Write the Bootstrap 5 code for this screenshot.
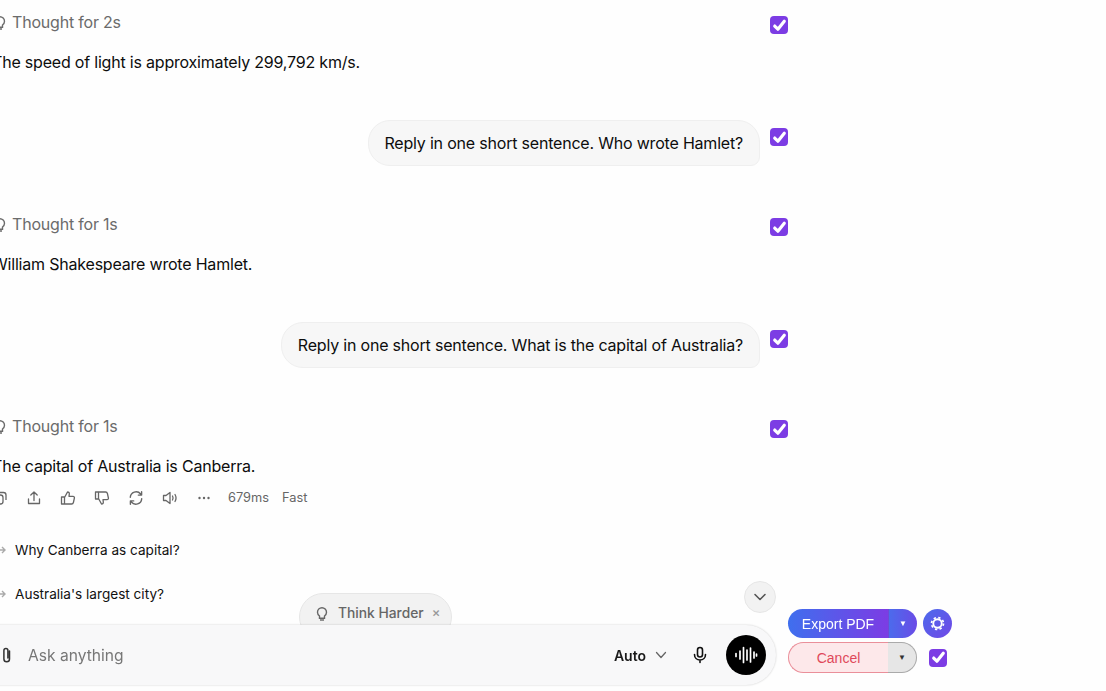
<!DOCTYPE html>
<html lang="en">
<head>
<meta charset="UTF-8" />
<meta name="viewport" content="width=device-width, initial-scale=1.0" />
<title>Chat</title>
<link href="https://cdn.jsdelivr.net/npm/bootstrap@5.3.3/dist/css/bootstrap.min.css" rel="stylesheet" />
<style>
html, body { height: 100%; }
body { font-family: Inter, "Liberation Sans", sans-serif; background: #fefefe; color: #0d0d0d; overflow: hidden; font-size: 16px; letter-spacing: -.2px; }
svg { display: block; flex: none; }
.thread { width: 796px; margin-left: -8px; padding-top: 12px; }
.pick { width: 18px; height: 18px; margin: 0 !important; border-radius: 3px; border: 0; flex: none; background-color: #7c3ce4; background-size: 17px;
  background-image: url("data:image/svg+xml,%3csvg xmlns='http://www.w3.org/2000/svg' viewBox='0 0 16 16'%3e%3cpath fill='none' stroke='%23fff' stroke-width='3' stroke-linecap='round' stroke-linejoin='round' d='M3.500 8.500l3 3 6-7.500'/%3e%3c/svg%3e") !important; }
.pick:checked { background-color: #7c3ce4; }
.thought-row { height: 20px; color: #6b6b6b; }
.thought-row .pick { margin-top: 4px !important; }
.answer { margin-top: 20px; height: 20px; line-height: 20px; }
.user-row { height: 46px; }
.bubble { background: #f7f7f7; border: 1px solid #efefef; border-radius: 22px 22px 9px 22px; height: 46px; line-height: 44px; padding: 0 16px; margin-right: 10px; }
.user-row .pick { margin-top: 8px !important; }
.gap-a { height: 48px; }
.gap-b { height: 48px; }
.tools { margin-top: 2px; height: 40px; color: #666; font-size: 12.8px; letter-spacing: 0; }
.tool-icon { width: 34px; }
.tool-last { width: 32px; }
.tool-text { margin-right: 13px; }
.suggest { height: 44px; font-size: 13.6px; color: #111; letter-spacing: 0; }
.suggest svg { margin-left: 3px; margin-right: 8px; }
.suggest-first { margin-top: 10px; }
.pill { position: fixed; left: 299px; top: 593px; width: 153px; height: 48px; background: #f2f2f2; border: 1px solid #e6e6e6; border-radius: 24px; padding: 0 0 8px 14px; color: #666; font-size: 13.8px; font-weight: 500; letter-spacing: 0; }
.pill-x { margin-left: 8px; color: #999; font-size: 13px; }
.composer { position: fixed; left: -30px; top: 625px; width: 806px; height: 60px; background: #f8f8f9; border-radius: 30px; box-shadow: 0 0 2px rgba(0,0,0,.22); padding: 0 10px 0 29px; }
.ask { color: #777; font-size: 15.6px; margin-left: 13px; padding-top: 1px; letter-spacing: 0; }
.auto-txt { font-size: 14px; font-weight: 600; color: #1a1a1a; letter-spacing: 0; }
.mic-icon { margin-left: 23px; margin-right: 17px; }
.voice { width: 40px; height: 40px; background: #000; border-radius: 50%; }
.down-btn { position: fixed; left: 744px; top: 581px; width: 32px; height: 32px; background: #f2f2f2; border: 1px solid #e6e6e6; border-radius: 50%; }
.export-box { position: fixed; left: 788px; top: 609px; width: 165px; font-family: "Liberation Sans", Arial, sans-serif; letter-spacing: 0; }
.split-main, .split-side { border: 0; height: 29px; color: #fff; }
.split-main { width: 100px; font-size: 14px; padding: 1px 0 0; background: linear-gradient(90deg, #3f6fee, #7c3ce4); border-radius: 15px 0 0 15px; }
.split-side { width: 29px; background: linear-gradient(90deg, #4c6bec, #6a4be6); border-left: 1px solid #6d4ad6; border-radius: 0 15px 15px 0; font-size: 8px; padding: 0; }
.gear-btn { width: 29px; height: 29px; border-radius: 50%; background: linear-gradient(135deg, #4c6bec, #7047e6); margin-left: 6px; }
.cancel-main, .cancel-side { height: 31px; padding: 0; }
.cancel-main { width: 100px; font-size: 14px; padding-top: 1px; color: #e0485a; background: #fde8ea; border: 1px solid #ea8f9a; border-right: 0; border-radius: 16px 0 0 16px; }
.cancel-side { width: 29px; font-size: 8px; color: #333; background: #e6e6e6; border: 1px solid #aaa; border-left: 0; border-radius: 0 16px 16px 0; }
.cancel-line { margin-top: 4px; }
.cancel-line .pick { margin-left: 12px !important; }
</style>
</head>
<body>

<main class="thread">
  <!-- turn 1 -->
  <div class="thought-row d-flex">
    <div class="flex-grow-1 d-flex align-items-center">
      <svg width="16" height="16" viewBox="0 0 16 16" fill="none" stroke="#6b6b6b" stroke-width="1.4"><path d="M5.500 11C4.300 10 3.500 8.800 3.500 7.200a4.500 4.500 0 0 1 9 0c0 1.600-.8 2.800-2 3.800v2.200h-5z"/><path d="M6 15h4"/></svg>
      <span class="ms-1">Thought for 2s</span>
    </div>
    <input class="form-check-input pick" type="checkbox" checked>
  </div>
  <div class="answer">The speed of light is approximately 299,792 km/s.</div>
  <div class="gap-a"></div>
  <div class="user-row d-flex justify-content-end">
    <div class="bubble">Reply in one short sentence. Who wrote Hamlet?</div>
    <input class="form-check-input pick" type="checkbox" checked>
  </div>
  <div class="gap-b"></div>

  <!-- turn 2 -->
  <div class="thought-row d-flex">
    <div class="flex-grow-1 d-flex align-items-center">
      <svg width="16" height="16" viewBox="0 0 16 16" fill="none" stroke="#6b6b6b" stroke-width="1.4"><path d="M5.500 11C4.300 10 3.500 8.800 3.500 7.200a4.500 4.500 0 0 1 9 0c0 1.600-.8 2.800-2 3.800v2.200h-5z"/><path d="M6 15h4"/></svg>
      <span class="ms-1">Thought for 1s</span>
    </div>
    <input class="form-check-input pick" type="checkbox" checked>
  </div>
  <div class="answer">William Shakespeare wrote Hamlet.</div>
  <div class="gap-a"></div>
  <div class="user-row d-flex justify-content-end">
    <div class="bubble">Reply in one short sentence. What is the capital of Australia?</div>
    <input class="form-check-input pick" type="checkbox" checked>
  </div>
  <div class="gap-b"></div>

  <!-- turn 3 -->
  <div class="thought-row d-flex">
    <div class="flex-grow-1 d-flex align-items-center">
      <svg width="16" height="16" viewBox="0 0 16 16" fill="none" stroke="#6b6b6b" stroke-width="1.4"><path d="M5.500 11C4.300 10 3.500 8.800 3.500 7.200a4.500 4.500 0 0 1 9 0c0 1.600-.8 2.800-2 3.800v2.200h-5z"/><path d="M6 15h4"/></svg>
      <span class="ms-1">Thought for 1s</span>
    </div>
    <input class="form-check-input pick" type="checkbox" checked>
  </div>
  <div class="answer">The capital of Australia is Canberra.</div>

  <div class="tools d-flex align-items-center">
    <div class="tool-icon"><svg width="16" height="16" viewBox="0 0 16 16" fill="none" stroke="#666" stroke-width="1.3"><rect x="2" y="5" width="9" height="9" rx="2.500"/><path d="M6 2.500h5.500a2.500 2.500 0 0 1 2.500 2.500v5"/></svg></div>
    <div class="tool-icon"><svg width="16" height="16" viewBox="0 0 16 16" fill="none" stroke="#666" stroke-width="1.3" stroke-linecap="round" stroke-linejoin="round"><path d="M8 10.500V2M4.800 5 8 2l3.200 3"/><path d="M2.500 9v4.500h11V9"/></svg></div>
    <div class="tool-icon"><svg width="16" height="16" viewBox="0 0 16 16" fill="none" stroke="#666" stroke-width="1.3" stroke-linejoin="round"><path d="M1.500 7h3v7h-3zM4.500 7.500 7.500 2c1.300 0 2 .8 1.800 2L9 6.300h4c1 0 1.600.8 1.400 1.700l-1 4.500c-.2.900-.8 1.500-1.800 1.500h-7"/></svg></div>
    <div class="tool-icon"><svg width="16" height="16" viewBox="0 0 16 16" fill="none" stroke="#666" stroke-width="1.3" stroke-linejoin="round"><path d="M1.500 2h3v7h-3zM4.500 8.500 7.500 14c1.300 0 2-.8 1.800-2L9 9.700h4c1 0 1.600-.8 1.400-1.700l-1-4.500C13.200 2.600 12.600 2 11.600 2h-7"/></svg></div>
    <div class="tool-icon"><svg width="16" height="16" viewBox="0 0 16 16" fill="none" stroke="#666" stroke-width="1.4" stroke-linecap="round" stroke-linejoin="round"><path d="M2.300 7.300A5.800 5.800 0 0 1 12.600 4l1 1.100M13.600 1.800v3.300h-3.300"/><path d="M13.700 8.700A5.800 5.800 0 0 1 3.400 12l-1-1.100M2.400 14.200v-3.300h3.300"/></svg></div>
    <div class="tool-icon"><svg width="16" height="16" viewBox="0 0 16 16" fill="none" stroke="#666" stroke-width="1.3" stroke-linecap="round" stroke-linejoin="round"><path d="M1.500 5.500h2.500L8 2.500v11L4 10.500H1.500z"/><path d="M10.500 6c.7 1.200.7 2.800 0 4M13 4.500c1.300 2.200 1.300 4.800 0 7"/></svg></div>
    <div class="tool-last"><svg width="16" height="16" viewBox="0 0 16 16" fill="#666"><circle cx="3.500" cy="8" r="1.200"/><circle cx="8" cy="8" r="1.200"/><circle cx="12.500" cy="8" r="1.200"/></svg></div>
    <span class="tool-text">679ms</span>
    <span>Fast</span>
  </div>

  <div class="suggest suggest-first d-flex align-items-center">
    <svg width="12" height="12" viewBox="0 0 12 12" fill="none" stroke="#aaa" stroke-width="1.4"><path d="M1 6h9M7 3l3 3-3 3"/></svg>
    <span>Why Canberra as capital?</span>
  </div>
  <div class="suggest d-flex align-items-center">
    <svg width="12" height="12" viewBox="0 0 12 12" fill="none" stroke="#aaa" stroke-width="1.4"><path d="M1 6h9M7 3l3 3-3 3"/></svg>
    <span>Australia's largest city?</span>
  </div>
</main>

<div class="pill d-flex align-items-center">
  <svg width="16" height="16" viewBox="0 0 16 16" fill="none" stroke="#666" stroke-width="1.4"><path d="M5.500 11C4.300 10 3.500 8.800 3.500 7.200a4.500 4.500 0 0 1 9 0c0 1.600-.8 2.800-2 3.800v2.200h-5z"/><path d="M6 15h4"/></svg>
  <span class="ms-2">Think Harder</span>
  <span class="pill-x">×</span>
</div>

<button class="down-btn d-flex align-items-center justify-content-center p-0" type="button" aria-label="Scroll down">
  <svg width="14" height="14" viewBox="0 0 14 14" fill="none" stroke="#555" stroke-width="1.600" stroke-linecap="round" stroke-linejoin="round"><path d="M2 4.500 7 9.500l5-5"/></svg>
</button>

<div class="composer d-flex align-items-center">
  <svg width="16" height="18" viewBox="0 0 16 18" fill="none" stroke="#333" stroke-width="1.500" stroke-linecap="round"><path d="M10.500 5v8a2.800 2.800 0 0 1-5.600 0V4.500a2 2 0 0 1 4 0V12"/></svg>
  <span class="ask flex-grow-1">Ask anything</span>
  <span class="auto-txt">Auto</span>
  <svg class="ms-2" width="14" height="14" viewBox="0 0 14 14" fill="none" stroke="#666" stroke-width="1.300" stroke-linecap="round" stroke-linejoin="round"><path d="M2.500 4.500 7 9.500l4.500-5"/></svg>
  <svg class="mic-icon" width="18" height="18" viewBox="0 0 18 18" fill="none" stroke="#111" stroke-width="1.600" stroke-linecap="round"><rect x="6.500" y="1.500" width="5" height="9.500" rx="2.500"/><path d="M3.500 8.500c0 3.200 2.400 5.500 5.500 5.500s5.500-2.300 5.500-5.500M9 14v2.500"/></svg>
  <div class="voice d-flex align-items-center justify-content-center">
    <svg width="24" height="24" viewBox="0 0 24 24" stroke="#fff" stroke-width="1.700" stroke-linecap="round"><path d="M2 10.500v3M6 8v8M9.500 4.500v15M13 7v10M16.500 5v14M20 9v6M22.500 11v2"/></svg>
  </div>
</div>

<div class="export-box">
  <div class="d-flex align-items-center">
    <button class="split-main" type="button">Export PDF</button>
    <button class="split-side" type="button">▼</button>
    <div class="gear-btn d-flex align-items-center justify-content-center">
      <svg width="15" height="15" viewBox="0 0 16 16" fill="none" stroke="#fff"><circle cx="8" cy="8" r="4.500" stroke-width="2"/><circle cx="8" cy="8" r="6.400" stroke-width="1.800" stroke-dasharray="2.500 2.530"/></svg>
    </div>
  </div>
  <div class="d-flex align-items-center cancel-line">
    <button class="cancel-main" type="button">Cancel</button>
    <button class="cancel-side" type="button">▼</button>
    <input class="form-check-input pick" type="checkbox" checked>
  </div>
</div>

<script src="https://cdn.jsdelivr.net/npm/bootstrap@5.3.3/dist/js/bootstrap.bundle.min.js"></script>
</body>
</html>
